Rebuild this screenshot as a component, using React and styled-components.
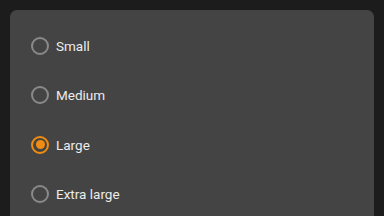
import React, { useState } from 'react'
import styled, { createGlobalStyle } from 'styled-components'

const Global = createGlobalStyle`
  html, body {
    margin: 0;
    background: #1c1c1c;
    font-family: Roboto, "Noto Sans", sans-serif;
  }
`

const Page = styled.div`
  height: 216px;
  overflow: hidden;
  padding: 10px 10px 0;
  box-sizing: border-box;
`

const Panel = styled.div`
  background: #444444;
  border-radius: 7px;
  padding: 11px 21px 20px;
  display: flex;
  flex-direction: column;
`

const Option = styled.label`
  display: flex;
  align-items: center;
  gap: 7px;
  height: 49.5px;
  cursor: pointer;
`

const Ring = styled.span`
  width: 18px;
  height: 18px;
  box-sizing: border-box;
  border-radius: 50%;
  border: 2px solid ${p => (p.$checked ? '#f28c10' : '#8a8a8a')};
  display: flex;
  align-items: center;
  justify-content: center;

  &::after {
    content: '';
    width: 9px;
    height: 9px;
    border-radius: 50%;
    background: #f28c10;
    display: ${p => (p.$checked ? 'block' : 'none')};
  }
`

const Text = styled.span`
  color: #ececec;
  font-size: 13.5px;
`

const sizes = ['Small', 'Medium', 'Large', 'Extra large']

const App = () => {
  const [value, setValue] = useState('Large')
  return (
    <Page>
      <Global />
      <Panel>
        {sizes.map(s => (
          <Option key={s} onClick={() => setValue(s)}>
            <Ring $checked={value === s} />
            <Text>{s}</Text>
          </Option>
        ))}
      </Panel>
    </Page>
  )
}

export default App
